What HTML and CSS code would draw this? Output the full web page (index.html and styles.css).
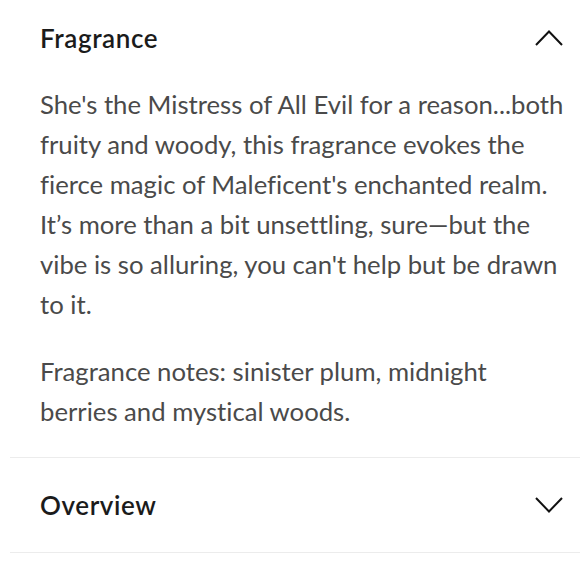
FILE: index.html
```html
<!DOCTYPE html>
<html>
<head>
<meta charset="utf-8">
<link rel="stylesheet" href="styles.css">
</head>
<body>
<div class="accordion">
  <section class="item open">
    <div class="head">
      <h2 class="title">Fragrance</h2>
      <svg class="chev" width="28" height="16" viewBox="0 0 28 16"><polyline points="1,15 14,1.5 27,15" fill="none" stroke="#111" stroke-width="2"/></svg>
    </div>
    <div class="body">
      <p>She's the Mistress of All Evil for a reason...both fruity and woody, this fragrance evokes the fierce magic of Maleficent's enchanted realm. It’s more than a bit unsettling, sure—but the vibe is so alluring, you can't help but be drawn to it.</p>
      <p>Fragrance notes: sinister plum, midnight berries and mystical woods.</p>
    </div>
  </section>
  <section class="item">
    <div class="head">
      <h2 class="title">Overview</h2>
      <svg class="chev" width="28" height="16" viewBox="0 0 28 16"><polyline points="1,1 14,14.5 27,1" fill="none" stroke="#111" stroke-width="2"/></svg>
    </div>
  </section>
</div>
</body>
</html>
```

FILE: styles.css
```css
html, body {
  margin: 0;
  padding: 0;
  background: #fff;
}
body {
  font-family: "Lato", "Liberation Sans", sans-serif;
  font-variant-ligatures: none;
  overflow: hidden;
}
.accordion {
  margin-left: 10px;
  width: 570px;
}
.item {
  border-bottom: 1px solid #ececec;
}
.head {
  display: flex;
  align-items: center;
  justify-content: space-between;
  height: 94px;
  padding: 0 17px 0 30px;
}
.item:first-child .head {
  height: 76px;
}
.title {
  margin: 0;
  font-size: 26px;
  font-weight: 600;
  color: #1b1b1b;
  letter-spacing: 0.6px;
}
.chev {
  display: block;
}
.body {
  padding: 8px 17px 26px 30px;
}
.body p {
  margin: 0;
  font-size: 25.7px;
  line-height: 40px;
  color: #4a4a4a;
  width: 530px;
}
.body p + p {
  margin-top: 27px;
}
```
